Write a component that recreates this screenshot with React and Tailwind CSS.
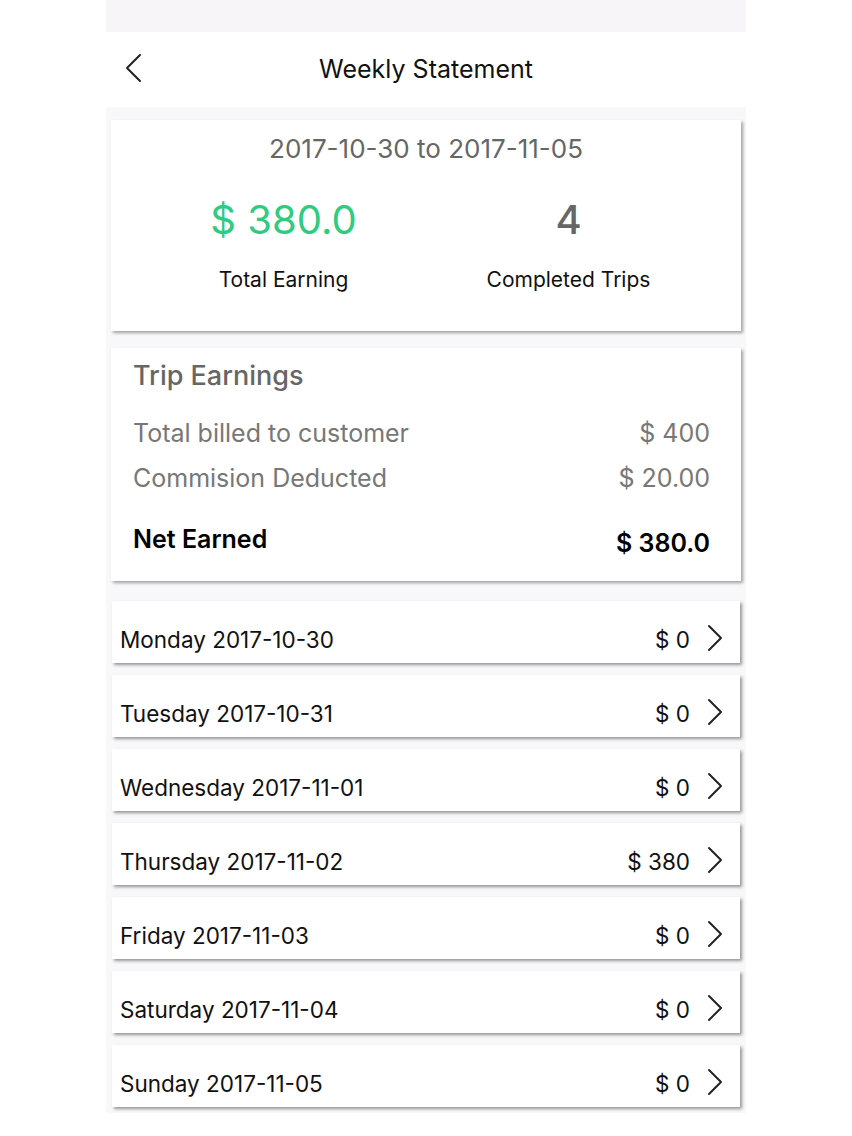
import React from "react";

const days = [
  ["Monday 2017-10-30", "$ 0"],
  ["Tuesday 2017-10-31", "$ 0"],
  ["Wednesday 2017-11-01", "$ 0"],
  ["Thursday 2017-11-02", "$ 380"],
  ["Friday 2017-11-03", "$ 0"],
  ["Saturday 2017-11-04", "$ 0"],
  ["Sunday 2017-11-05", "$ 0"],
];

function Chevron({ left }) {
  return (
    <svg width="18" height="30" viewBox="0 0 18 30" fill="none" stroke="#222" strokeWidth="2" strokeLinecap="round" strokeLinejoin="round">
      {left ? <path d="M16 2 L3 15 L16 28" /> : <path d="M3 2 L15 14 L3 26" />}
    </svg>
  );
}

export default function App() {
  return (
    <div className="w-[852px] min-h-[1136px] bg-white flex justify-center" style={{ fontFamily: "Inter, Roboto, 'Noto Sans', sans-serif" }}>
      <div className="w-[640px] bg-[#f8f7f9] flex flex-col pb-[6px] self-start">
        <div className="h-[32px] bg-[#f7f5f7]" />
        <div className="h-[75px] bg-white flex items-center relative">
          <div className="absolute left-[18px] top-[21px]">
            <Chevron left />
          </div>
          <div className="w-full text-center text-[25px] text-[#111]">Weekly Statement</div>
        </div>
        <div className="flex flex-col px-[5px] pt-[13px]">
          <div className="h-[211px] bg-white shadow-[2px_2px_3px_rgba(0,0,0,0.35)] flex flex-col items-center">
            <div className="mt-[14px] text-[26px] text-[#666] leading-[30px]">2017-10-30 to 2017-11-05</div>
            <div className="flex w-full mt-[33px]">
              <div className="w-1/2 flex flex-col items-center pl-[30px] pr-0">
                <div className="text-[40px] leading-[46px] text-[#2ecc80]">$ 380.0</div>
                <div className="text-[21px] text-[#111] mt-[21px]">Total Earning</div>
              </div>
              <div className="w-1/2 flex flex-col items-center pr-[30px]">
                <div className="text-[40px] leading-[46px] text-[#666] font-medium">4</div>
                <div className="text-[21px] text-[#111] mt-[21px]">Completed Trips</div>
              </div>
            </div>
          </div>
          <div className="h-[233px] mt-[17px] bg-white shadow-[2px_2px_3px_rgba(0,0,0,0.35)] flex flex-col px-[22px] pr-[31px]">
            <div className="mt-[12px] text-[27px] font-medium text-[#666] leading-[32px]">Trip Earnings</div>
            <div className="mt-[26px] flex justify-between text-[25px] text-[#777] leading-[30px]">
              <span>Total billed to customer</span>
              <span>$ 400</span>
            </div>
            <div className="mt-[15px] flex justify-between text-[25px] text-[#777] leading-[30px]">
              <span>Commision Deducted</span>
              <span>$ 20.00</span>
            </div>
            <div className="mt-[31px] flex justify-between items-end text-[25px] font-semibold text-black leading-[30px]">
              <span className="mb-[4px]">Net Earned</span>
              <span>$ 380.0</span>
            </div>
          </div>
          <div className="flex flex-col gap-[12px] mt-[20px] px-[1px]">
            {days.map(([d, v]) => (
              <div key={d} className="h-[62px] bg-white shadow-[2px_2px_3px_rgba(0,0,0,0.4)] flex items-center pl-[8px] pr-[16px] pt-[16px]">
                <div className="flex-1 text-[22.5px] text-[#111]">{d}</div>
                <div className="text-[22.5px] text-[#111] mr-[16px]">{v}</div>
                <div className="-mt-[16px] pt-[14px]"><Chevron /></div>
              </div>
            ))}
          </div>
        </div>
      </div>
    </div>
  );
}
